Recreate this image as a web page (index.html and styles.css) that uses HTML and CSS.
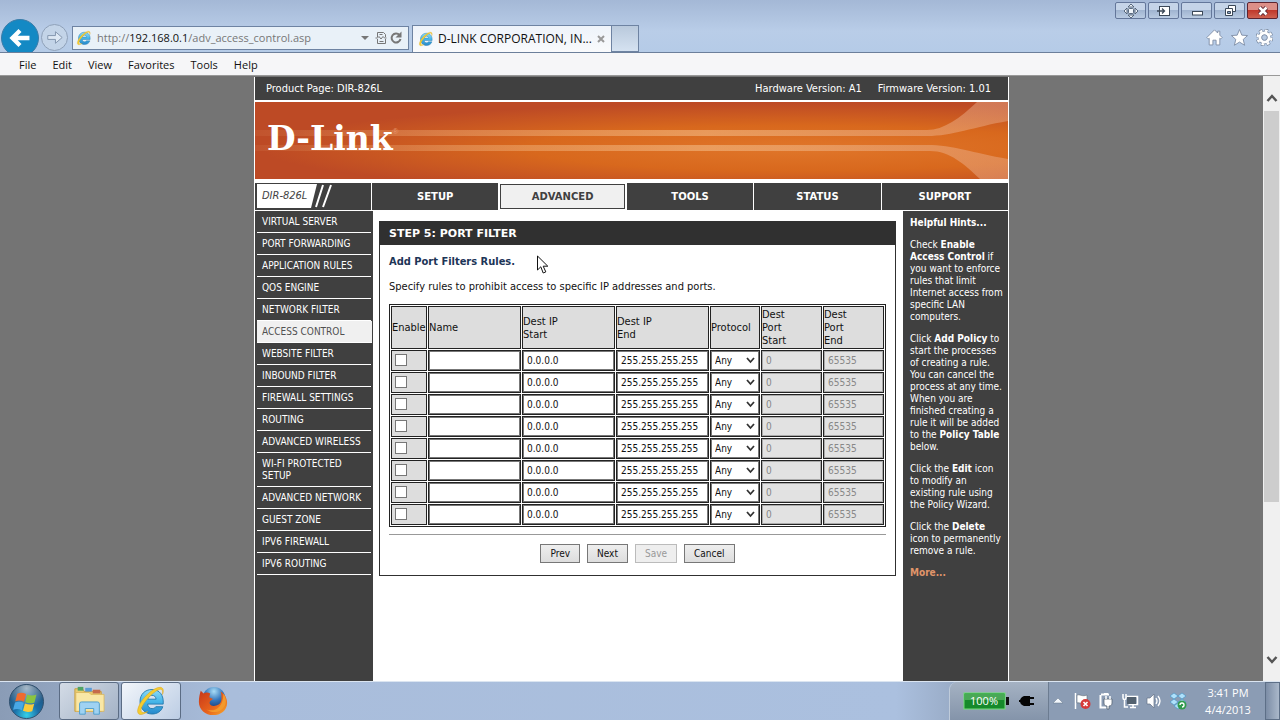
FILE: index.html
```html
<!DOCTYPE html>
<html lang="en">
<head>
<meta charset="utf-8">
<title>D-LINK CORPORATION, INC | WIRELESS ROUTER</title>
<link rel="stylesheet" href="styles.css">
</head>
<body>
<svg class="defs" aria-hidden="true">
  <defs>
    <linearGradient id="ieBlue" x1="0" y1="0" x2="0" y2="1"><stop offset="0" stop-color="#8fdcf8"/><stop offset=".5" stop-color="#45b5e8"/><stop offset="1" stop-color="#2788cb"/></linearGradient>
    <symbol id="ie" viewBox="0 0 32 32">
      <path d="M17 4.500C9.800 4.500 5 9.500 5 16.500S10 29 17 29c5.400 0 9.300-2.700 10.800-7.300h-7c-.8 1.300-2 1.900-3.700 1.900-2.600 0-4.300-1.700-4.500-4.500h15.600C29 10.200 24.500 4.500 17 4.500zm-4.300 9.700c.4-2.400 1.900-3.900 4.200-3.900 2.400 0 3.900 1.400 4.200 3.900z" fill="url(#ieBlue)" stroke="#2378ad" stroke-width=".9"/>
      <path d="M27.500 9.500c1.600-4.100.9-6.900-2.200-7.200C19 1.700 5.500 14 3 23.500c-1 3.800.1 6.200 3 6 2-.1 4.400-1.300 6.700-3-3 1.400-5.800 1.600-6.500-.2C4.500 22 16.500 7.500 24 4.600c2.900-1.100 4.200.8 3.500 4.900z" fill="#f5cc30" stroke="#d9a21c" stroke-width=".5"/>
    </symbol>
  </defs>
</svg>

<header class="chrome">
  <button class="back" aria-label="Back"><svg viewBox="0 0 38 38"><path d="M29 19H12M19 11l-8 8 8 8" fill="none" stroke="#fff" stroke-width="4.500"/></svg></button>
  <button class="forward" aria-label="Forward"><svg viewBox="0 0 26 26"><path d="M6 11h8V7l7 6-7 6v-4H6z" fill="#dde8f4" stroke="#8295ae" stroke-width="1"/></svg></button>
  <div class="address">
    <svg class="ie16"><use href="#ie"/></svg>
    <span class="url">http://<b>192.168.0.1</b>/adv_access_control.asp</span>
    <svg class="addr-icons" viewBox="0 0 46 16"><path d="M2 6h8l-4 4z" fill="#777"/><g fill="none" stroke="#777"><path d="M18.500 7V2.500h6l2 2V7M18.500 9v4.500h8V9M16.500 8h2l1.500-1.500L22 9l2-2.500L25.500 8h2M20.500 4.500h3M20.500 11.500h4"/><path d="M40.500 5A4.500 4.500 0 1 0 41.500 9" stroke-width="2"/></g><path d="M42.500 1.500v6h-6z" fill="#777"/></svg>
  </div>
  <div class="tab"><svg class="ie16"><use href="#ie"/></svg><span>D-LINK CORPORATION, IN...</span><button class="x" aria-label="Close tab"><svg viewBox="0 0 8 8"><path d="M1 1l6 6M7 1L1 7" stroke="#999" stroke-width="2"/></svg></button></div>
  <button class="newtab" aria-label="New tab"></button>
  <div class="controls">
    <div class="winbtns">
      <button aria-label="Move"><svg viewBox="0 0 18 14"><g fill="#eef4fa" stroke="#4c5c70" stroke-width=".9"><path d="M9 0l3 3H6zM9 14l3-3H6zM2 7l3-3v6zM16 7l-3-3v6z"/><rect x="6.500" y="4.500" width="5" height="5" rx="1"/></g></svg></button>
      <button aria-label="Dock"><svg viewBox="0 0 18 14"><rect x="4.500" y="2.500" width="10" height="9" fill="#fff" stroke="#3b4858"/><path d="M2 7h7M7 4.500L9.500 7 7 9.500" fill="none" stroke="#3b4858" stroke-width="1.300"/></svg></button>
      <button aria-label="Minimize"><svg viewBox="0 0 18 14"><rect x="4.500" y="7.500" width="10" height="3.500" fill="#fff" stroke="#3b4858"/></svg></button>
      <button aria-label="Restore"><svg viewBox="0 0 18 14"><g fill="#fff" stroke="#3b4858"><path d="M7.500 1.500h7v6h-7z"/><path d="M4.500 4.500h7v7h-7z"/><path d="M6.500 7.500h3v2h-3z" fill="#8ba4c4"/></g></svg></button>
      <button class="close" aria-label="Close"><svg viewBox="0 0 18 14"><path d="M5.500 3.500l7 7M12.500 3.500l-7 7" stroke="#5a2530" stroke-width="4.500"/><path d="M5.500 3.500l7 7M12.500 3.500l-7 7" stroke="#fff" stroke-width="2.600"/></svg></button>
    </div>
    <div class="tools">
      <button aria-label="Home"><svg viewBox="0 0 16 16"><path d="M8 .8L.8 8l1.400 1.400L3 8.700V15h3.500v-4.500h3V15H13V8.700l.8.7L15.200 8 13 5.800V2h-2v1.800z" fill="#fff" stroke="#7888a0" stroke-width=".8"/></svg></button>
      <button aria-label="Favorites"><svg viewBox="0 0 16 16"><path d="M8 .5l2.200 5.300 5.400.4-4.100 3.600 1.300 5.500L8 12.300l-4.800 3 1.300-5.500L.4 6.200l5.400-.4z" fill="#fff" stroke="#7888a0" stroke-width=".8"/></svg></button>
      <button aria-label="Tools"><svg viewBox="0 0 16 16"><circle cx="8" cy="8" r="6.500" fill="none" stroke="#7888a0" stroke-width="3.600" stroke-dasharray="3.100 2"/><circle cx="8" cy="8" r="4.300" fill="none" stroke="#7888a0" stroke-width="4"/><circle cx="8" cy="8" r="6.500" fill="none" stroke="#fff" stroke-width="2.200" stroke-dasharray="2.500 2.600" stroke-dashoffset="-.3"/><circle cx="8" cy="8" r="4.300" fill="none" stroke="#fff" stroke-width="2.800"/><circle cx="8" cy="8" r="2.500" fill="#b8cbe3" stroke="#7888a0" stroke-width=".6"/></svg></button>
    </div>
  </div>
</header>

<nav class="menubar" aria-label="Menu">
  <button>File</button><button>Edit</button><button>View</button><button>Favorites</button><button>Tools</button><button>Help</button>
</nav>

<div class="viewport">
  <div class="canvas">
    <div class="page">
      <div class="product"><span>Product Page: DIR-826L</span><span class="hw">Hardware Version: A1</span><span>Firmware Version: 1.01</span></div>
      <div class="banner">
        <svg class="rays" viewBox="0 0 753 77" preserveAspectRatio="none" aria-hidden="true">
          <defs><linearGradient id="ray"><stop offset="0" stop-color="#f5c08c" stop-opacity=".08"/><stop offset=".25" stop-color="#f5c08c" stop-opacity=".35"/><stop offset=".6" stop-color="#f5c08c" stop-opacity=".55"/><stop offset="1" stop-color="#eab090" stop-opacity=".45"/></linearGradient></defs>
          <path d="M0 28h672c17 0 33-12 50-28h31v19c-35 6-55 15-81 15H0z" fill="url(#ray)"/>
          <path d="M0 43h672c26 0 46 8 81 14v20h-28c-16-15-30-28-50-28H0z" fill="url(#ray)"/>
        </svg>
        <a class="logo" href="#">D-Link<sup>®</sup></a>
      </div>
      <nav class="topnav" aria-label="Sections">
        <div class="model"><span>DIR-826L</span><svg viewBox="0 0 30 24" aria-hidden="true"><path d="M0 0h8L2 24H0z" fill="#fff"/><path d="M14 1L7 23M22 1l-8 22" stroke="#fff" stroke-width="2"/></svg></div>
        <a href="#">SETUP</a><a href="#" class="active">ADVANCED</a><a href="#">TOOLS</a><a href="#">STATUS</a><a href="#">SUPPORT</a>
      </nav>
      <div class="body">
        <nav class="side" aria-label="Advanced">
          <a href="#">VIRTUAL SERVER</a><a href="#">PORT FORWARDING</a><a href="#">APPLICATION RULES</a><a href="#">QOS ENGINE</a><a href="#">NETWORK FILTER</a><a href="#" class="active">ACCESS CONTROL</a><a href="#">WEBSITE FILTER</a><a href="#">INBOUND FILTER</a><a href="#">FIREWALL SETTINGS</a><a href="#">ROUTING</a><a href="#">ADVANCED WIRELESS</a><a href="#">WI-FI PROTECTED SETUP</a><a href="#">ADVANCED NETWORK</a><a href="#">GUEST ZONE</a><a href="#">IPV6 FIREWALL</a><a href="#">IPV6 ROUTING</a>
        </nav>
        <main class="content">
          <form class="box">
            <h1>STEP 5: PORT FILTER</h1>
            <div class="inner">
              <h2>Add Port Filters Rules.</h2>
              <p>Specify rules to prohibit access to specific IP addresses and ports.</p>
              <table>
                <colgroup><col class="c-en"><col class="c-tx"><col class="c-tx"><col class="c-tx"><col class="c-pr"><col class="c-po"><col class="c-po"></colgroup>
                <thead><tr><th>Enable</th><th>Name</th><th>Dest IP<br>Start</th><th>Dest IP<br>End</th><th>Protocol</th><th>Dest<br>Port<br>Start</th><th>Dest<br>Port<br>End</th></tr></thead>
                <tbody>
                  <tr><td><input type="checkbox" aria-label="Enable rule 1"></td><td><input type="text" aria-label="Name 1"></td><td><input type="text" aria-label="Start IP 1" value="0.0.0.0"></td><td><input type="text" aria-label="End IP 1" value="255.255.255.255"></td><td><select aria-label="Protocol 1"><option>Any</option></select></td><td><input type="text" aria-label="Start port 1" value="0" disabled></td><td><input type="text" aria-label="End port 1" value="65535" disabled></td></tr>
                  <tr><td><input type="checkbox" aria-label="Enable rule 2"></td><td><input type="text" aria-label="Name 2"></td><td><input type="text" aria-label="Start IP 2" value="0.0.0.0"></td><td><input type="text" aria-label="End IP 2" value="255.255.255.255"></td><td><select aria-label="Protocol 2"><option>Any</option></select></td><td><input type="text" aria-label="Start port 2" value="0" disabled></td><td><input type="text" aria-label="End port 2" value="65535" disabled></td></tr>
                  <tr><td><input type="checkbox" aria-label="Enable rule 3"></td><td><input type="text" aria-label="Name 3"></td><td><input type="text" aria-label="Start IP 3" value="0.0.0.0"></td><td><input type="text" aria-label="End IP 3" value="255.255.255.255"></td><td><select aria-label="Protocol 3"><option>Any</option></select></td><td><input type="text" aria-label="Start port 3" value="0" disabled></td><td><input type="text" aria-label="End port 3" value="65535" disabled></td></tr>
                  <tr><td><input type="checkbox" aria-label="Enable rule 4"></td><td><input type="text" aria-label="Name 4"></td><td><input type="text" aria-label="Start IP 4" value="0.0.0.0"></td><td><input type="text" aria-label="End IP 4" value="255.255.255.255"></td><td><select aria-label="Protocol 4"><option>Any</option></select></td><td><input type="text" aria-label="Start port 4" value="0" disabled></td><td><input type="text" aria-label="End port 4" value="65535" disabled></td></tr>
                  <tr><td><input type="checkbox" aria-label="Enable rule 5"></td><td><input type="text" aria-label="Name 5"></td><td><input type="text" aria-label="Start IP 5" value="0.0.0.0"></td><td><input type="text" aria-label="End IP 5" value="255.255.255.255"></td><td><select aria-label="Protocol 5"><option>Any</option></select></td><td><input type="text" aria-label="Start port 5" value="0" disabled></td><td><input type="text" aria-label="End port 5" value="65535" disabled></td></tr>
                  <tr><td><input type="checkbox" aria-label="Enable rule 6"></td><td><input type="text" aria-label="Name 6"></td><td><input type="text" aria-label="Start IP 6" value="0.0.0.0"></td><td><input type="text" aria-label="End IP 6" value="255.255.255.255"></td><td><select aria-label="Protocol 6"><option>Any</option></select></td><td><input type="text" aria-label="Start port 6" value="0" disabled></td><td><input type="text" aria-label="End port 6" value="65535" disabled></td></tr>
                  <tr><td><input type="checkbox" aria-label="Enable rule 7"></td><td><input type="text" aria-label="Name 7"></td><td><input type="text" aria-label="Start IP 7" value="0.0.0.0"></td><td><input type="text" aria-label="End IP 7" value="255.255.255.255"></td><td><select aria-label="Protocol 7"><option>Any</option></select></td><td><input type="text" aria-label="Start port 7" value="0" disabled></td><td><input type="text" aria-label="End port 7" value="65535" disabled></td></tr>
                  <tr><td><input type="checkbox" aria-label="Enable rule 8"></td><td><input type="text" aria-label="Name 8"></td><td><input type="text" aria-label="Start IP 8" value="0.0.0.0"></td><td><input type="text" aria-label="End IP 8" value="255.255.255.255"></td><td><select aria-label="Protocol 8"><option>Any</option></select></td><td><input type="text" aria-label="Start port 8" value="0" disabled></td><td><input type="text" aria-label="End port 8" value="65535" disabled></td></tr>
                </tbody>
              </table>
              <hr>
              <div class="actions"><button type="button">Prev</button><button type="button">Next</button><button type="button" disabled>Save</button><button type="button">Cancel</button></div>
            </div>
          </form>
        </main>
        <aside class="hints">
          <p><b>Helpful Hints...</b></p>
          <p>Check <b>Enable Access Control</b> if you want to enforce rules that limit Internet access from specific LAN computers.</p>
          <p>Click <b>Add Policy</b> to start the processes of creating a rule. You can cancel the process at any time. When you are finished creating a rule it will be added to the <b>Policy Table</b> below.</p>
          <p>Click the <b>Edit</b> icon to modify an existing rule using the Policy Wizard.</p>
          <p>Click the <b>Delete</b> icon to permanently remove a rule.</p>
          <p><a href="#">More...</a></p>
        </aside>
      </div>
    </div>
  </div>
  <div class="scroll" aria-hidden="true">
    <svg viewBox="0 0 16 16"><path d="M3.500 11L8 6l4.500 5" fill="none" stroke="#555" stroke-width="2.500"/></svg>
    <div class="track"><div class="thumb"></div></div>
    <svg viewBox="0 0 16 16"><path d="M3.500 6L8 11l4.500-5" fill="none" stroke="#555" stroke-width="2.500"/></svg>
  </div>
</div>

<footer class="taskbar">
  <button class="start" aria-label="Start"><svg viewBox="0 0 38 38"><defs><radialGradient id="orb" cx=".5" cy=".9" r=".9"><stop offset="0" stop-color="#35d0e8"/><stop offset=".4" stop-color="#1c6fa8"/><stop offset="1" stop-color="#234a6e"/></radialGradient><radialGradient id="orbTop" cx=".5" cy=".1" r=".6"><stop offset="0" stop-color="#fff" stop-opacity=".6"/><stop offset="1" stop-color="#fff" stop-opacity="0"/></radialGradient></defs><circle cx="19" cy="19" r="17.500" fill="url(#orb)" stroke="#31506e"/><circle cx="19" cy="19" r="17" fill="url(#orbTop)"/><path d="M9.500 11c3-1.500 6-1.300 9 .2l-2 8c-3-1.500-6-1.700-9-.4z" fill="#ef6b2e"/><path d="M19.700 11.700c3 1.400 6 1.600 9.500.2l-2 8c-3.300 1.300-6.400 1.100-9.500-.2z" fill="#8bc53f"/><path d="M7.200 20c3-1.300 6-1.100 9 .4l-2 7.500c-3-1.500-6-1.600-9-.3z" fill="#48a8e6"/><path d="M17.400 21c3 1.400 6.200 1.500 9.500.2l-2 7.700c-3.300 1.200-6.400 1-9.500-.3z" fill="#fbca3a"/></svg></button>
  <button class="task" aria-label="Windows Explorer"><svg viewBox="0 0 34 34"><path d="M2 4h8l2 3h18v21H2z" fill="#e9cc72" stroke="#c79e40"/><path d="M5 2h6v4H5z" fill="#4fa364"/><path d="M13 3h7v4h-7z" fill="#5b9bd5"/><path d="M21 5h8v4h-8z" fill="#c66b4a"/><path d="M3 8h14l2 2h14v18H3z" fill="#f9e7a6" stroke="#d8b458" stroke-width=".8"/><path d="M7 31V20q0-2 2-2h17q2 0 2 2v11h-6v-6h-9v6z" fill="#9fd2f2" stroke="#4d9dcc"/></svg></button>
  <button class="task open" aria-label="Internet Explorer"><svg viewBox="0 0 34 34"><use href="#ie" width="34" height="34"/></svg></button>
  <button class="plain" aria-label="Firefox"><svg viewBox="0 0 34 34"><defs><radialGradient id="globe" cx=".5" cy=".2" r=".8"><stop offset="0" stop-color="#a8dcf5"/><stop offset=".5" stop-color="#3577bd"/><stop offset="1" stop-color="#16336e"/></radialGradient><linearGradient id="fox" x1="0" y1="0" x2="1" y2="1"><stop offset="0" stop-color="#c7361a"/><stop offset=".6" stop-color="#e8641c"/><stop offset="1" stop-color="#f9ae2c"/></linearGradient></defs><circle cx="18" cy="14" r="12" fill="url(#globe)"/><path d="M4 6l3 3c2-1.500 5-1.300 7 0l-1 4 4 2-3 2c-2 3 1 6 5 5 4 0 7-3 7-7 0-3 0-6-1-8 4 2 7 7 7 12 0 8-7 13-15 13S2 26 2 18C2 13 3 9 4 6z" fill="url(#fox)"/><path d="M28 9c4 5 4 14-3 18-5 3-11 2-15-1 8 3 18-1 18-17z" fill="#f39a2c"/></svg></button>
  <div class="power">
    <svg viewBox="0 0 46 18"><rect x="1" y="1" width="41" height="16" fill="#168a2b" stroke="#73e078"/><rect x="2" y="2" width="39" height="6" fill="#49a856"/><rect x="43" y="5" width="3" height="8" fill="#111"/><text x="21" y="13">100%</text></svg>
    <svg class="plug" viewBox="0 0 16 12"><path d="M5 1h6v10H5C2 10 1 8 1 6s1-4 4-5z" fill="#050505"/><path d="M11 3h4M11 9h4M0 6h2" stroke="#050505" stroke-width="2"/></svg>
  </div>
  <div class="tray">
    <svg viewBox="0 0 18 18"><path d="M4 11l5-5 5 5z" fill="#f3f7fc" stroke="#67788c" stroke-width=".5"/></svg>
    <svg viewBox="0 0 18 18"><path d="M2.500 1v16" stroke="#fff" stroke-width="1.500"/><path d="M4 3c3-1 5 2 10 0v8c-5 2-7-1-10 0z" fill="#fff" stroke="#5a6876" stroke-width=".6"/><circle cx="12.500" cy="12" r="5" fill="#d63a3a"/><path d="M10.500 10l4 4M14.500 10l-4 4" stroke="#fff" stroke-width="1.600"/></svg>
    <svg viewBox="0 0 18 18"><path d="M7 2h3V1M4 2.500h8M3.500 3v12.500h6" fill="none" stroke="#fff" stroke-width="2"/><path d="M7 7h8v4c0 2-1 3-3 3v3h-2v-3c-2 0-3-1-3-3z" fill="#fff" stroke="#4c5967" stroke-width=".7"/><path d="M9 4v3M13 4v3" stroke="#fff" stroke-width="1.500"/></svg>
    <svg viewBox="0 0 18 18"><path d="M5.500 4.500h11v8h-9M9 15.500h6M12 13v2" fill="none" stroke="#fff" stroke-width="1.500"/><rect x="6" y="5" width="9" height="7" fill="#53616f"/><path d="M2 2v4c0 2 3 2 3 0V2M3.500 8v7H7" fill="none" stroke="#fff" stroke-width="1.500"/></svg>
    <svg viewBox="0 0 18 18"><path d="M2 6h3l4-4v14l-4-4H2z" fill="#fff" stroke="#657386" stroke-width=".7"/><path d="M11 6q2 3 0 6M13 4q4 5 0 10" fill="none" stroke="#fff" stroke-width="1.300"/></svg>
    <svg viewBox="0 0 18 18"><path d="M5 1l4 3-4 3-4-3zM13 1l4 3-4 3-4-3zM5 7l4 3-4 3-4-3zM13 7l4 3-4 3-4-3zM9 11l4 3-4 3-4-3z" fill="#aee0fa" stroke="#3f90c4" stroke-width=".6"/><circle cx="13" cy="13" r="4.500" fill="#329b4d"/><path d="M11 13a2 2 0 1 1 2 2" fill="none" stroke="#fff" stroke-width="1.300"/></svg>
  </div>
  <div class="clock"><span>3:41 PM</span><span>4/4/2013</span></div>
  <button class="desk" aria-label="Show desktop"></button>
</footer>
<svg class="cursor" viewBox="0 0 14 20" aria-hidden="true"><path d="M1.500 1v14l3.300-3.200L7.200 18l2.600-1.100-2.600-5.700h4.600z" fill="#fff" stroke="#111"/></svg>
</body>
</html>
```
FILE: styles.css
```css
* { box-sizing: border-box; }
body {
  margin: 0;
  height: 100vh;
  display: flex;
  flex-direction: column;
  overflow: hidden;
  font: 11px/12px "DejaVu Sans Condensed", "DejaVu Sans", sans-serif;
  color: #111;
  background: #747474;
}
button { font: inherit; margin: 0; padding: 0; border: 0; background: none; color: inherit; }
a { color: inherit; text-decoration: none; }
svg { display: block; }
.defs { position: absolute; width: 0; height: 0; }

.chrome {
  display: flex;
  align-items: flex-end;
  height: 53px;
  flex: none;
  overflow: hidden;
  padding-left: 1px;
  border-bottom: 1px solid #6c7f9b;
  background: linear-gradient(#a4b8d6, #b9cde8 60%, #b5cbe7);
  font: 11px/18px "Open Sans", sans-serif;
}
.back { width: 38px; height: 38px; flex: none; margin-bottom: -5px; border-radius: 50%; background: #1489c4; border: 1px solid #3a7ca8; }
.forward { width: 27px; height: 27px; flex: none; margin: 0 4px 1px 2px; border: 1px solid #8fa1b9; border-radius: 50%; background: #c3d4e8; }
.address {
  display: flex;
  align-items: center;
  width: 337px;
  height: 24px;
  margin: 0 3px 2px 0;
  padding: 0 3px;
  gap: 5px;
  border: 1px solid #6e83a2;
  background: #e9f1f8;
  color: #777;
}
.url { flex: 1; white-space: nowrap; }
.url b { font-weight: 400; color: #111; }
.ie16 { width: 16px; height: 16px; flex: none; }
.addr-icons { width: 46px; height: 16px; flex: none; }
.tab {
  display: flex;
  align-items: center;
  gap: 4px;
  width: 200px;
  height: 27px;
  padding: 0 6px 0 5px;
  border: 1px solid #6e83a2;
  border-bottom: 0;
  background: linear-gradient(#eef3fa, #f9fafc);
  white-space: nowrap;
  font-size: 12px;
}
.tab span { flex: 1; }
.x { width: 8px; height: 8px; flex: none; }
.newtab { width: 27px; height: 27px; flex: none; border: 1px solid #6e83a2; border-left: 0; background: linear-gradient(#b9c9dc, #d5e2f1); }
.controls { margin-left: auto; align-self: stretch; display: flex; flex-direction: column; align-items: flex-end; gap: 10px; }
.winbtns { display: flex; gap: 2px; padding: 2px 2px 0 0; }
.winbtns button {
  width: 31px;
  height: 17px;
  display: flex;
  align-items: center;
  justify-content: center;
  border: 1px solid #64779a;
  border-radius: 2px;
  background: linear-gradient(#c5d4e8 45%, #a1b5d1 50%, #b9cbe2);
}
.winbtns svg { width: 18px; height: 14px; }
.winbtns .close { border-color: #5d2430; background: linear-gradient(#dc8f88 45%, #c0392c 50%, #cf6251); }
.tools { display: flex; gap: 8px; padding-right: 7px; }
.tools svg { width: 17px; height: 17px; }

.menubar { display: flex; gap: 16px; height: 23px; flex: none; padding-left: 19px; border-bottom: 1px solid #999; background: #f6f6f8; font: 11px/23px "Open Sans", sans-serif; }

.viewport { flex: 1; min-height: 0; display: flex; }
.canvas { flex: 1; min-width: 0; display: flex; justify-content: center; overflow: hidden; background: #747474; }
.page { display: flex; flex-direction: column; width: 755px; max-width: 100%; margin-top: 1px; border: solid #fff; border-width: 0 1px; background: #fff; }
.product { display: flex; align-items: center; gap: 16px; height: 23px; flex: none; padding: 0 17px 0 11px; background: #404040; color: #fff; }
.hw { margin-left: auto; }
.banner { position: relative; height: 77px; margin: 2px 0 4px; flex: none; display: flex; padding: 18px 12px; background: radial-gradient(ellipse at 72% 60%, #e0762a, #d8681d 35%, transparent 70%), #bd4a25; }
.rays { position: absolute; inset: 0; width: 100%; height: 100%; }
.logo { position: relative; color: #fff; font: bold 33px/38px "DejaVu Serif", serif; }
.logo sup { font: 8px/8px "Liberation Sans", sans-serif; color: #e89770; vertical-align: 16px; }

.topnav { display: flex; gap: 1px; height: 27px; flex: none; margin-bottom: 1px; font: bold 10px/27px "DejaVu Sans", sans-serif; color: #fff; text-align: center; }
.topnav a { flex: 1; background: #404040; }
.topnav .active { background: #f0f0f0; color: #404040; box-shadow: inset 0 0 0 1px #fff, inset 0 0 0 2px #404040; }
.model { display: flex; width: 116px; padding: 1px 2px 2px; background: #404040; }
.model span { padding: 0 2px 0 5px; background: #fff; color: #444; font: italic 11px/24px "DejaVu Sans Condensed", "DejaVu Sans", sans-serif; }
.model svg { width: 30px; height: 24px; }

.body { flex: 1; display: flex; }
.side { width: 118px; flex: none; padding: 0 2px; background: #404040; color: #fff; font-size: 10px; }
.side a { display: block; padding: 5px 5px 4px; border-bottom: 1px solid #fff; }
.side .active { margin-right: -1px; background: #f0f0f0; color: #505050; }
.content { flex: 1; min-width: 0; padding: 10px 7px 10px 6px; }
.box { border: 1px solid #303030; }
h1 { margin: 0; padding: 0 9px; font: bold 11px/23px "DejaVu Sans", sans-serif; color: #fff; background: #303030; }
.inner { padding: 10px 9px 12px; }
h2 { margin: 0 0 12px; font-size: 11px; line-height: 13px; color: #1d3557; }
p { margin: 0; }
.inner p { line-height: 13px; margin-bottom: 11px; }
table { width: 100%; table-layout: fixed; border: 1px solid #222; border-spacing: 1px; font-size: 11px; line-height: 13px; }
.c-en { width: 36px; }
.c-pr { width: 50px; }
.c-po { width: 61px; }
th, td { padding: 0; border: 1px solid #222; background: #ddd; }
th { height: 43px; font-weight: 400; text-align: left; white-space: nowrap; }
td { height: 21px; }
td input, td select { display: block; width: 100%; height: 19px; margin: 0; font: 10px/13px "DejaVu Sans Condensed", "DejaVu Sans", sans-serif; color: #111; border: 1px solid #777; border-radius: 0; background: #fff; }
td input { padding: 0 3px; }
td input[type="checkbox"] { appearance: none; width: 12px; height: 12px; margin: 0 3px 2px; padding: 0; }
td input:disabled { background: #e2e2e2; color: #888; border-color: #aaa; }
td select { appearance: none; padding: 0 3px; background: #fff url("data:image/svg+xml,%3Csvg xmlns='http://www.w3.org/2000/svg' width='9' height='7'%3E%3Cpath d='M1 1l3.500 4L8 1' fill='none' stroke='%23333' stroke-width='1.800'/%3E%3C/svg%3E") no-repeat right 3px center; }
hr { margin: 7px 0 9px; border: 0; border-top: 1px solid #999; }
.actions { display: flex; justify-content: center; gap: 7px; }
.actions button { height: 19px; padding: 0 9px; border: 1px solid #777; background: linear-gradient(#eee, #ddd); font-size: 10px; }
.actions button:disabled { color: #999; border-color: #bbb; background: #eee; }

.hints { width: 105px; flex: none; padding: 6px 4px 0 7px; background: #404040; color: #fff; font-size: 10px; }
.hints p { margin-bottom: 10px; }
.hints a { color: #e0956a; font-weight: bold; }

.scroll { width: 17px; flex: none; display: flex; flex-direction: column; align-items: center; padding: 14px 0; background: #f0f0f0; }
.scroll svg { width: 16px; height: 16px; }
.track { flex: 1; align-self: stretch; padding: 5px 1px; }
.thumb { height: 73%; background: #cdcdcd; }

.taskbar { display: flex; align-items: stretch; height: 39px; flex: none; overflow: hidden; border-top: 1px solid #dbe5f1; background: linear-gradient(90deg, #8a9cb6, #a9bddb 18%, #abc0df 70%, #8b9cb4 78%, #8b9cb4); color: #fff; }
.start { width: 37px; margin: 0 14px 0 8px; }
.start svg { width: 37px; height: 37px; }
.task { width: 60px; margin-right: 2px; display: flex; align-items: center; justify-content: center; border: 1px solid #5b6c84; border-radius: 3px; background: linear-gradient(135deg, #d3dbe6, #a3b2c6); }
.task.open { background: linear-gradient(135deg, #f2f6fb, #bccde4); }
.task svg, .plain svg { width: 32px; height: 32px; }
.plain { margin-left: 14px; }
.power { display: flex; align-items: center; gap: 10px; width: 99px; margin-left: auto; padding-left: 13px; border: 1px solid #6c7c91; border-width: 0 1px 0 0; border-radius: 8px 0 0 0; background: linear-gradient(#a5b2c3, #8494aa); box-shadow: -1px 0 #bfcbda; }
.power svg { width: 46px; height: 18px; flex: none; }
.power text { font: 11px "Open Sans", sans-serif; fill: #fff; text-anchor: middle; }
.power .plug { width: 16px; height: 12px; }
.tray { display: flex; align-items: center; gap: 6px; }
.tray svg { width: 18px; height: 18px; }
.clock { display: flex; flex-direction: column; justify-content: center; width: 78px; padding-left: 4px; text-align: center; font: 11px/17px "Open Sans", sans-serif; }
.desk { width: 15px; border: 1px solid #5d6f87; background: linear-gradient(90deg, #7c8da6, #aab8ca); }
.cursor { position: absolute; left: 536px; top: 255px; width: 14px; height: 20px; }
```
